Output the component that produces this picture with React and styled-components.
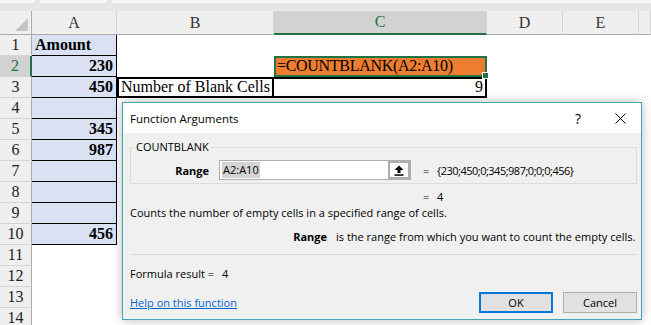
import React from "react";
import styled, { createGlobalStyle } from "styled-components";

const GlobalStyle = createGlobalStyle`
  html, body {
    margin: 0;
    padding: 0;
    background: #fff;
    overflow: hidden;
  }
`;

const Page = styled.div`
  position: relative;
  width: 651px;
  height: 325px;
  overflow: hidden;
  font-family: "Liberation Serif", "DejaVu Serif", serif;
  color: #000;
`;

const TopStrip = styled.div`
  height: 11px;
  background: #e6e6e6;
  display: flex;
  gap: 5px;
  align-items: flex-start;
`;

const Stub = styled.div`
  height: 3px;
  width: ${(p) => p.$w}px;
  flex: ${(p) => (p.$grow ? 1 : "none")};
  background: #f7f7f7;
`;

const Sheet = styled.div`
  display: grid;
  grid-template-columns: 32px 85px 157px 213px 76px 76px 1fr;
  grid-template-rows: 24px repeat(14, 21px);
`;

const Corner = styled.div`
  background: #efefef;
  border-right: 1px solid #ababab;
  border-bottom: 1px solid #ababab;
  display: flex;
  align-items: flex-end;
  justify-content: flex-end;
  padding: 0 3px 3px 0;
`;

const CornerTriangle = styled.div`
  width: 13px;
  height: 13px;
  background: #c4c4c4;
  clip-path: polygon(100% 0, 100% 100%, 0 100%);
`;

const ColHeader = styled.div`
  display: flex;
  align-items: center;
  justify-content: center;
  font-size: 16px;
  color: ${(p) => (p.$selected ? "#217346" : "#333")};
  background: ${(p) => (p.$selected ? "#d2d2d2" : "#efefef")};
  border-right: 1px solid #d4d4d4;
  border-bottom: ${(p) => (p.$selected ? "2px solid #217346" : "1px solid #ababab")};
`;

const RowHeader = styled.div`
  display: flex;
  align-items: center;
  justify-content: center;
  font-size: 16px;
  color: ${(p) => (p.$selected ? "#217346" : "#222")};
  background: ${(p) => (p.$selected ? "#d2d2d2" : "#efefef")};
  border-bottom: 1px solid #d4d4d4;
  border-right: ${(p) => (p.$selected ? "2px solid #217346" : "1px solid #ababab")};
`;

const Cell = styled.div`
  display: flex;
  align-items: flex-end;
  justify-content: ${(p) => (p.$align === "right" ? "flex-end" : "flex-start")};
  padding: 0 3px 1px;
  box-sizing: border-box;
  min-width: 0;
  overflow: hidden;
  white-space: nowrap;
  font-size: 16px;
  line-height: 19px;
  background: #fff;
`;

const AmountCell = styled(Cell)`
  background: #d9e1f2;
  font-weight: 700;
  border-right: 1px solid #000;
  border-bottom: 1px solid #000;
`;

const ActiveCell = styled(Cell)`
  position: relative;
  z-index: 1;
  overflow: visible;
  background: #ed7d31;
  border: 2px solid #217346;
  padding: 0 2px 0 1px;
  letter-spacing: -0.3px;
`;

const FillHandle = styled.span`
  position: absolute;
  right: -4px;
  bottom: -4px;
  width: 5px;
  height: 5px;
  background: #217346;
  border: 1px solid #fff;
`;

const BoxedCell = styled(Cell)`
  border: 2px solid #000;
  border-left-width: ${(p) => (p.$noLeft ? 0 : 2)}px;
  padding: 0 2px 0 2px;
`;

const Dialog = styled.div`
  position: absolute;
  left: 122px;
  top: 102px;
  width: 520px;
  box-sizing: border-box;
  border: 1px solid #43a5b8;
  background: #f0f0f0;
  box-shadow: 0 0 10px rgba(0, 0, 0, 0.28);
  font-family: "Open Sans", "Liberation Sans", sans-serif;
  font-size: 11px;
  color: #000;
`;

const TitleBar = styled.div`
  height: 30px;
  background: #fff;
  display: flex;
  align-items: center;
`;

const Title = styled.div`
  flex: 1;
  padding-left: 7px;
  font-size: 11.5px;
`;

const TitleButton = styled.div`
  width: 42px;
  height: 30px;
  display: flex;
  align-items: center;
  justify-content: center;
  font-size: 14px;
`;

const Body = styled.div`
  padding: 7px 4px 6px 7px;
`;

const Group = styled.fieldset`
  margin: 0;
  padding: 6px 0 3px 0;
  border: 1px solid #dcdcdc;
  min-width: 0;
`;

const GroupLegend = styled.legend`
  margin-left: 3px;
  padding: 0 2px;
  line-height: 14px;
`;

const ArgRow = styled.div`
  display: flex;
  align-items: center;
`;

const ArgLabel = styled.div`
  width: 78px;
  margin-right: 10px;
  text-align: right;
  font-weight: 700;
`;

const InputBox = styled.div`
  width: 192px;
  height: 20px;
  box-sizing: border-box;
  border: 1px solid #adadad;
  background: #fff;
  display: flex;
`;

const InputText = styled.div`
  flex: 1;
  display: flex;
  align-items: center;
  padding-left: 2px;
`;

const Selection = styled.span`
  background: #d4d4d4;
  line-height: 16px;
  padding: 0 1px;
`;

const RefButton = styled.div`
  width: 22px;
  box-sizing: border-box;
  border: 2px solid #adadad;
  background: #fdfdfd;
  display: flex;
  align-items: center;
  justify-content: center;
`;

const EqSign = styled.span`
  display: inline-block;
  width: 14px;
  margin-left: ${(p) => p.$gap || 0}px;
`;

const ArrayValue = styled.span`
  letter-spacing: -0.5px;
`;

const Line = styled.div`
  line-height: 16px;
  height: 16px;
  margin-top: ${(p) => p.$mt || 0}px;
  padding-left: ${(p) => p.$indent || 0}px;
  white-space: nowrap;
  display: flex;
`;

const ArgDescLabel = styled.span`
  width: 197px;
  margin-right: 9px;
  text-align: right;
  font-weight: 700;
`;

const Separator = styled.div`
  height: 1px;
  background: #dadada;
  margin-top: 9px;
`;

const ResultLabel = styled.span`
  display: inline-block;
  width: 92px;
`;

const Footer = styled.div`
  display: flex;
  align-items: center;
  margin-top: 10px;
  gap: 10px;
`;

const HelpLink = styled.a`
  flex: 1;
  color: #0066cc;
  text-decoration: underline;
  cursor: pointer;
`;

const Button = styled.button`
  width: 74px;
  height: 21px;
  box-sizing: border-box;
  background: #e1e1e1;
  border: ${(p) => (p.$primary ? "2px solid #0078d7" : "1px solid #adadad")};
  font-family: inherit;
  font-size: 11px;
  color: #000;
  padding: 0;
`;

const CloseIcon = () => (
  <svg width="11" height="11" viewBox="0 0 11 11">
    <path d="M0.5 0.5 L10.5 10.5 M10.5 0.5 L0.5 10.5" stroke="#000" strokeWidth="1" />
  </svg>
);

const RefIcon = () => (
  <svg width="10" height="11" viewBox="0 0 10 11">
    <path d="M5 0.5 L9.5 5 H6.5 V8 H3.5 V5 H0.5 Z" fill="#000" />
    <rect x="0.5" y="9.3" width="9" height="1.5" fill="#000" />
  </svg>
);

const amounts = ["Amount", "230", "450", "", "345", "987", "", "", "", "456"];
const columns = ["A", "B", "C", "D", "E", ""];

function renderRow(r) {
  const cells = [
    <RowHeader key={`h${r}`} $selected={r === 2}>
      {r}
    </RowHeader>,
  ];

  if (r <= 10) {
    cells.push(
      <AmountCell key={`a${r}`} $align={r === 1 ? "left" : "right"}>
        {amounts[r - 1]}
      </AmountCell>
    );
  } else {
    cells.push(<Cell key={`a${r}`} />);
  }

  if (r === 2) {
    cells.push(<Cell key="b2" />);
    cells.push(
      <ActiveCell key="c2">
        =COUNTBLANK(A2:A10)
        <FillHandle />
      </ActiveCell>
    );
  } else if (r === 3) {
    cells.push(<BoxedCell key="b3">Number of Blank Cells</BoxedCell>);
    cells.push(
      <BoxedCell key="c3" $noLeft $align="right">
        9
      </BoxedCell>
    );
  } else {
    cells.push(<Cell key={`b${r}`} />);
    cells.push(<Cell key={`c${r}`} />);
  }

  cells.push(<Cell key={`d${r}`} />);
  cells.push(<Cell key={`e${r}`} />);
  cells.push(<Cell key={`f${r}`} />);
  return cells;
}

export default function App() {
  const rows = [];
  for (let r = 1; r <= 14; r++) {
    rows.push(...renderRow(r));
  }

  return (
    <Page>
      <GlobalStyle />
      <TopStrip>
        <Stub $w={35} />
        <Stub $w={67} />
        <Stub $grow />
      </TopStrip>
      <Sheet>
        <Corner>
          <CornerTriangle />
        </Corner>
        {columns.map((c) => (
          <ColHeader key={c || "f"} $selected={c === "C"}>
            {c}
          </ColHeader>
        ))}
        {rows}
      </Sheet>

      <Dialog>
        <TitleBar>
          <Title>Function Arguments</Title>
          <TitleButton>?</TitleButton>
          <TitleButton>
            <CloseIcon />
          </TitleButton>
        </TitleBar>
        <Body>
          <Group>
            <GroupLegend>COUNTBLANK</GroupLegend>
            <ArgRow>
              <ArgLabel>Range</ArgLabel>
              <InputBox>
                <InputText>
                  <Selection>A2:A10</Selection>
                </InputText>
                <RefButton>
                  <RefIcon />
                </RefButton>
              </InputBox>
              <EqSign $gap={12}>=</EqSign>
              <ArrayValue>{"{230;450;0;345;987;0;0;0;456}"}</ArrayValue>
            </ArgRow>
          </Group>
          <Line $mt={5} $indent={293}>
            <EqSign>=</EqSign>
            <span>4</span>
          </Line>
          <Line>Counts the number of empty cells in a specified range of cells.</Line>
          <Line $mt={8}>
            <ArgDescLabel>Range</ArgDescLabel>
            <span>is the range from which you want to count the empty cells.</span>
          </Line>
          <Separator />
          <Line $mt={11}>
            <ResultLabel>Formula result =</ResultLabel>
            <span>4</span>
          </Line>
          <Footer>
            <HelpLink>Help on this function</HelpLink>
            <Button $primary>OK</Button>
            <Button>Cancel</Button>
          </Footer>
        </Body>
      </Dialog>
    </Page>
  );
}
